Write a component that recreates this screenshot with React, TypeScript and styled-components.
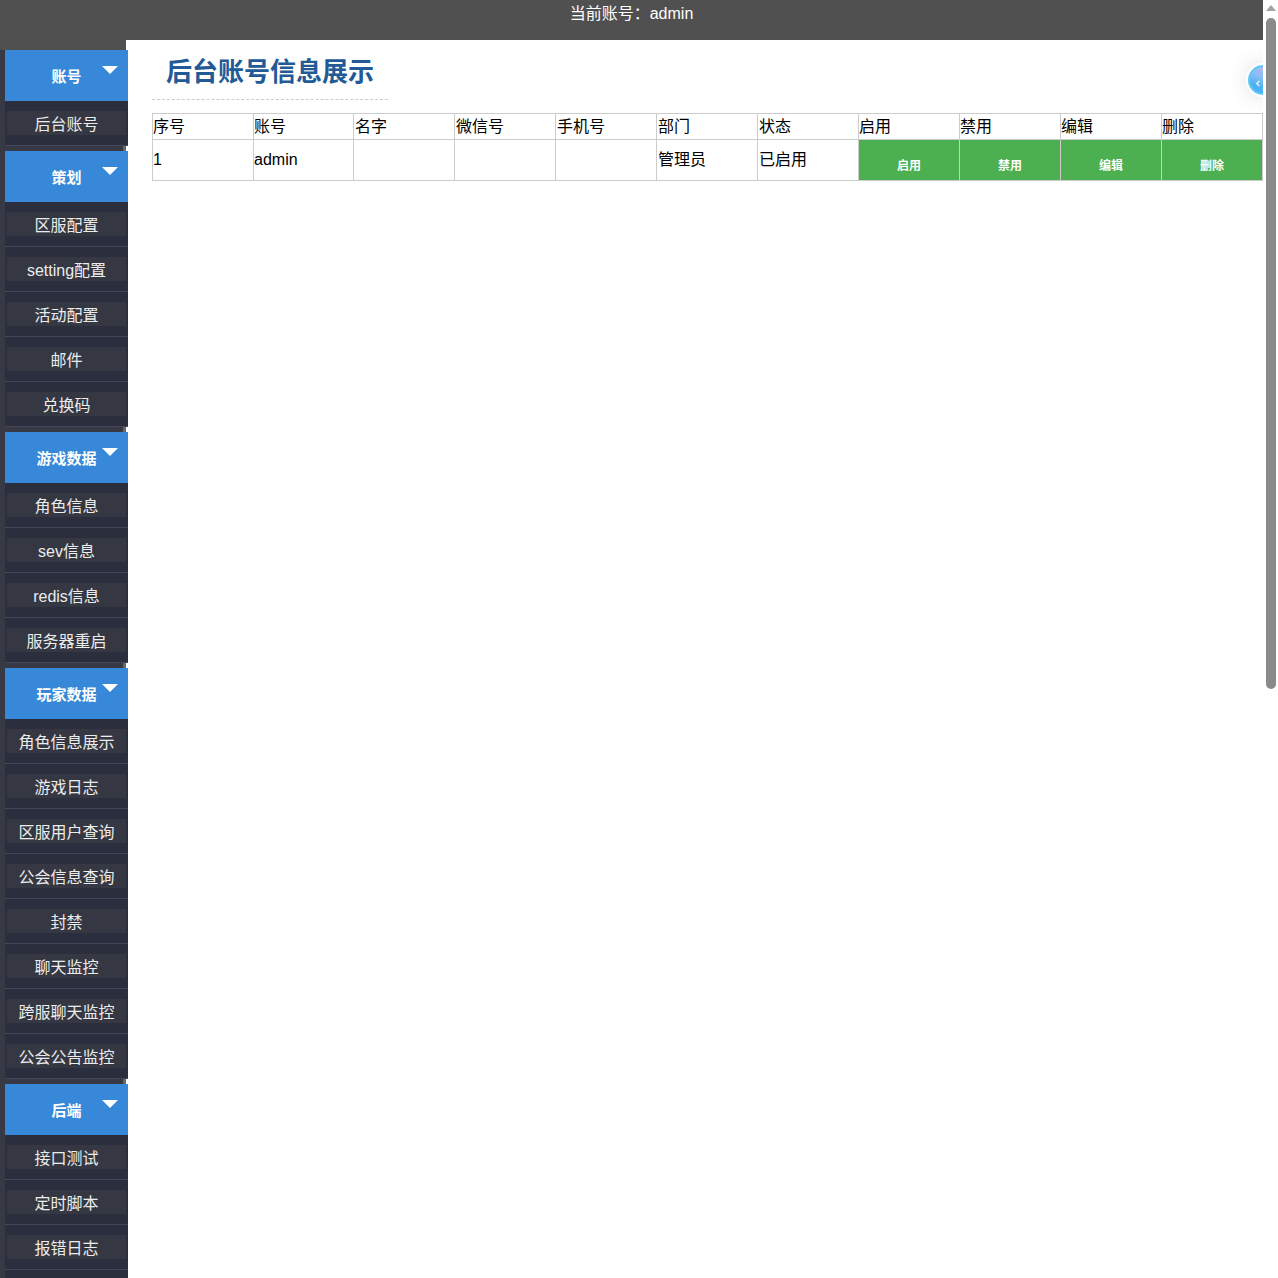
import React from 'react';
import styled, { createGlobalStyle } from 'styled-components';

const Global = createGlobalStyle`
  html, body { margin: 0; padding: 0; background: #fff; height: 100%; overflow: hidden; }
  body { font-family: "Liberation Sans", "Noto Sans CJK SC", sans-serif; font-size: 16px; color: #000; }
  #root { height: 100%; }
`;

const Page = styled.div`
  display: flex;
  height: 100vh;
  overflow: hidden;
`;

const Content = styled.div`
  position: relative;
  flex: 1;
  min-width: 0;
  overflow: hidden;
`;

const ScrollBar = styled.div`
  flex: none;
  width: 15px;
  background: #fff;
  padding: 5px 2px 0 3px;
  box-sizing: border-box;
`;

const ScrollArrow = styled.div`
  width: 0;
  height: 0;
  margin: 0 auto;
  border-left: 5px solid transparent;
  border-right: 5px solid transparent;
  border-bottom: 6px solid #a3a3a3;
`;

const ScrollThumb = styled.div`
  height: 671px;
  margin-top: 7px;
  background: #8a8a8a;
  border-radius: 5px;
`;

const Header = styled.header`
  height: 40px;
  background: #505050;
  color: #fff;
  text-align: center;
  line-height: 27px;
`;

const Body = styled.div`
  display: flex;
  align-items: flex-start;
`;

const Sidebar = styled.nav`
  width: 128px;
  flex: none;
  padding-top: 10px;
  background: linear-gradient(#505050, #505050) 0 0 / 126px 10px no-repeat;
`;

const Section = styled.section`
  padding-left: 5px;
  padding-bottom: 5px;
  background: linear-gradient(#666, #666) 123px 0 / 3px 100% no-repeat,
    linear-gradient(#373a44, #373a44) 0 0 / 126px 100% no-repeat;
`;

const SectionHead = styled.div`
  position: relative;
  height: 51px;
  background: #3788d8;
  color: #fff;
  font-size: 15px;
  font-weight: 700;
  text-align: center;
  line-height: 54px;
`;

const Caret = styled.span`
  position: absolute;
  top: 16px;
  right: 10px;
  border-left: 8px solid transparent;
  border-right: 8px solid transparent;
  border-top: 8px solid #fff;
`;

const Item = styled.a`
  display: block;
  width: 123px;
  height: 45px;
  padding: 10px 2px 0;
  box-sizing: border-box;
  background: #2b2e3c;
  border-bottom: 1px solid #44475a;
  color: #ececec;
  text-align: center;
`;

const ItemLabel = styled.span`
  display: block;
  height: 24px;
  line-height: 28px;
  background: #353842;
`;

const Main = styled.main`
  flex: 1;
  min-width: 0;
  padding: 12px 0 0 24px;
`;

const TitleBox = styled.div`
  width: 236px;
  height: 47px;
  border-bottom: 1px dashed #ccc;
`;

const Title = styled.h1`
  margin: 0;
  padding-left: 14px;
  font-size: 26px;
  line-height: 40px;
  font-weight: 700;
  color: #215a96;
  white-space: nowrap;
`;

const Table = styled.table`
  margin-top: 13px;
  table-layout: fixed;
  width: 1111px;
  border-collapse: collapse;
  font-size: 16px;
  line-height: 16px;
`;

const Th = styled.th`
  height: 26px;
  box-sizing: border-box;
  padding: 0;
  border: 1px solid #ccc;
  font-weight: 400;
  text-align: left;
  &:nth-child(n + 3):nth-child(-n + 7) { padding-left: 1px; }
`;

const Td = styled.td<{ $cjk?: boolean }>`
  height: 41px;
  box-sizing: border-box;
  padding: ${(p) => (p.$cjk ? '0 0 1px' : '0')};
  border: 1px solid #ccc;
  text-align: left;
  &:nth-child(n + 3):nth-child(-n + 7) { padding-left: 1px; }
`;

const ActionCell = styled.td`
  height: 41px;
  box-sizing: border-box;
  padding: 11px 0 0;
  border: 1px solid #ccc;
  background: #4caf50;
  color: #fff;
  font-size: 12px;
  font-weight: 700;
  text-align: center;
`;

const Ball = styled.div`
  position: absolute;
  top: 63px;
  left: 1246px;
  width: 34px;
  height: 34px;
  box-sizing: border-box;
  border-radius: 50%;
  border: 2px solid #fff;
  display: flex;
  align-items: center;
  padding: 6px 0 0 8px;
  background: linear-gradient(200deg, #d4b4f0 0%, #88bdf4 45%, #4ab2f2 70%);
  box-shadow: inset 0 0 0 2px #5cc8f8, 0 0 22px rgba(0, 0, 0, 0.12);
`;

const BallGlyph = styled.svg`
  width: 4px;
  height: 7px;
`;

const menu = [
  { title: '账号', items: ['后台账号'] },
  { title: '策划', items: ['区服配置', 'setting配置', '活动配置', '邮件', '兑换码'] },
  { title: '游戏数据', items: ['角色信息', 'sev信息', 'redis信息', '服务器重启'] },
  { title: '玩家数据', items: ['角色信息展示', '游戏日志', '区服用户查询', '公会信息查询', '封禁', '聊天监控', '跨服聊天监控', '公会公告监控'] },
  { title: '后端', items: ['接口测试', '定时脚本', '报错日志'] },
];

const columns = ['序号', '账号', '名字', '微信号', '手机号', '部门', '状态', '启用', '禁用', '编辑', '删除'];
const widths = [101, 100, 101, 101, 101, 101, 101, 101, 101, 101, 101];

export default function App() {
  return (
    <Page>
      <Global />
      <Content>
        <Header>当前账号：admin</Header>
        <Body>
          <Sidebar>
            {menu.map((s) => (
              <Section key={s.title}>
                <SectionHead>{s.title}<Caret /></SectionHead>
                {s.items.map((i) => (
                  <Item key={i}><ItemLabel>{i}</ItemLabel></Item>
                ))}
                {s.title === '后端' && <Item />}
              </Section>
            ))}
          </Sidebar>
          <Main>
            <TitleBox><Title>后台账号信息展示</Title></TitleBox>
            <Table>
              <colgroup>
                {widths.map((w, i) => <col key={i} style={{ width: w }} />)}
              </colgroup>
              <thead>
                <tr>{columns.map((c) => <Th key={c}>{c}</Th>)}</tr>
              </thead>
              <tbody>
                <tr>
                  <Td>1</Td>
                  <Td>admin</Td>
                  <Td />
                  <Td />
                  <Td />
                  <Td $cjk>管理员</Td>
                  <Td $cjk>已启用</Td>
                  <ActionCell>启用</ActionCell>
                  <ActionCell>禁用</ActionCell>
                  <ActionCell>编辑</ActionCell>
                  <ActionCell>删除</ActionCell>
                </tr>
              </tbody>
            </Table>
          </Main>
        </Body>
        <Ball>
          <BallGlyph viewBox="0 0 4 7"><path d="M3.4 .8.8 3.5l2.6 2.7" fill="none" stroke="#fff" strokeWidth="1.2" /></BallGlyph>
        </Ball>
      </Content>
      <ScrollBar>
        <ScrollArrow />
        <ScrollThumb />
      </ScrollBar>
    </Page>
  );
}
